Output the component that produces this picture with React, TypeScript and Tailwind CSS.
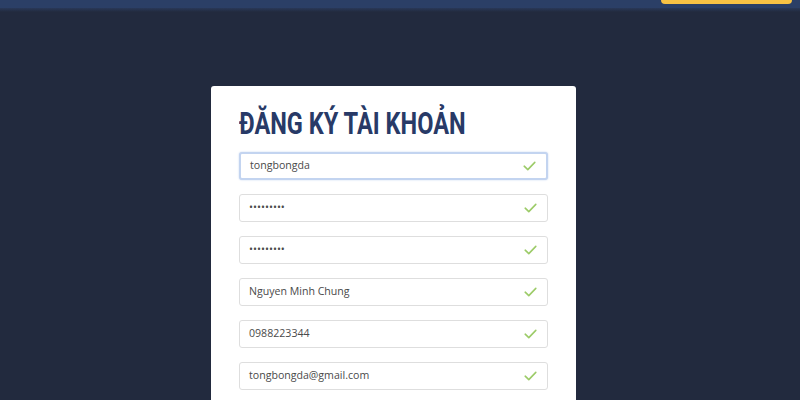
import React from "react";

function Check() {
  return (
    <svg width="13" height="10" viewBox="0 0 13 10" fill="none">
      <path d="M1.2 5.2 L4.8 8.6 L11.8 1.4" stroke="#9ccb68" strokeWidth="1.6" strokeLinecap="round" strokeLinejoin="round" />
    </svg>
  );
}

function Field({ value, focus }: { value: string; focus?: boolean }) {
  return (
    <div
      className={
        "flex h-[28px] w-[309px] items-center justify-between rounded-[3px] bg-white pl-[9px] pr-[10px] " +
        (focus
          ? "border-2 border-[#c3d4f0] shadow-[0_0_2px_#c3d4f0]"
          : "border border-[#dedede]")
      }
    >
      <span className="text-[10.6px] text-[#4a4a4a] [font-family:'Open_Sans',sans-serif]">{value}</span>
      <Check />
    </div>
  );
}

export default function App() {
  return (
    <div className="min-h-[400px] w-[800px] overflow-hidden bg-[#222a3e]">
      <div className="flex h-[8px] justify-end bg-[#2b3f66] pr-[8px]">
        <div className="h-[4px] w-[131px] rounded-b-[4px] bg-[#f8c244]" />
      </div>
      <div className="h-[4px] bg-gradient-to-b from-[#293858] to-[#222a3e]" />
      <div className="ml-[211px] mt-[74px] w-[365px] rounded-[3px] bg-white px-[28px] pt-[16px] pb-[20px]">
        <div className="h-[50px] overflow-visible">
          <h1 className="inline-block origin-left scale-x-[0.76] whitespace-nowrap text-[31px] font-bold leading-[44px] text-[#283a67] [font-family:Roboto,sans-serif]">
            ĐĂNG KÝ TÀI KHOẢN
          </h1>
        </div>
        <div className="flex flex-col gap-[14px]">
          <Field value="tongbongda" focus />
          <Field value="•••••••••" />
          <Field value="•••••••••" />
          <Field value="Nguyen Minh Chung" />
          <Field value="0988223344" />
          <Field value="tongbongda@gmail.com" />
        </div>
      </div>
    </div>
  );
}
